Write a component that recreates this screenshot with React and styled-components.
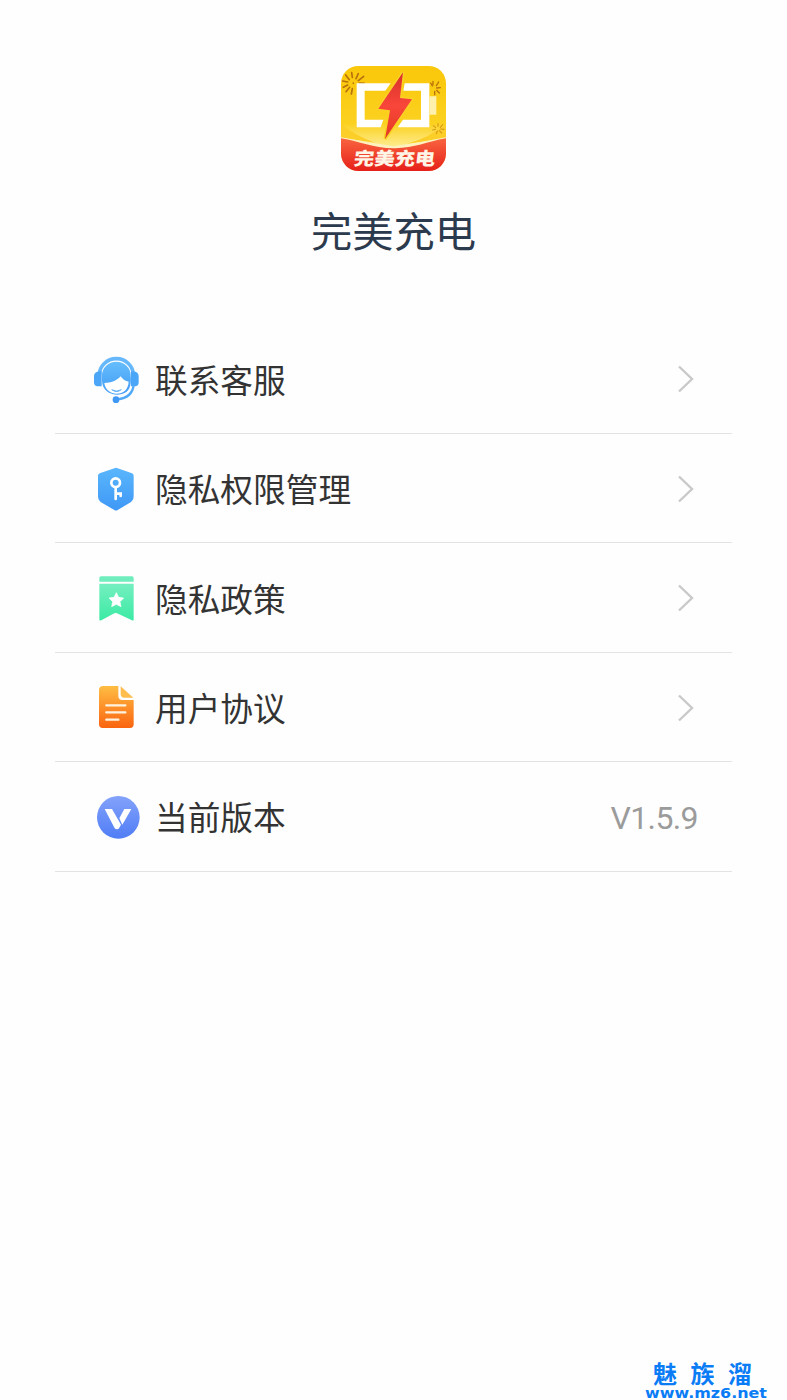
import React from 'react'
import styled, { createGlobalStyle } from 'styled-components'

const LogoArt = () => (
  <svg width='105' height='105' viewBox='33 32 315 315'>
    <defs>
      <linearGradient id='logoBg' x1='0' y1='0' x2='0' y2='1'>
        <stop offset='0' stopColor='#fac70a' />
        <stop offset='0.55' stopColor='#fbd120' />
        <stop offset='0.8' stopColor='#fff0a0' />
      </linearGradient>
      <linearGradient id='logoRed' x1='0' y1='0' x2='0' y2='1'>
        <stop offset='0' stopColor='#f9643f' />
        <stop offset='1' stopColor='#e6201a' />
      </linearGradient>
      <linearGradient id='bolt' x1='0' y1='0' x2='0' y2='1'>
        <stop offset='0' stopColor='#d8312a' />
        <stop offset='0.5' stopColor='#f9463a' />
        <stop offset='1' stopColor='#e23a22' />
      </linearGradient>
      <clipPath id='logoClip'>
        <rect x='33' y='32' width='315' height='315' rx='52' />
      </clipPath>
    </defs>
    <g clipPath='url(#logoClip)'>
      <rect x='33' y='32' width='315' height='315' fill='url(#logoBg)' />
      <path d='M33 206Q78 242 135 262L33 247Z' fill='#fbce28' />
      <path d='M348 206Q300 246 230 266L348 248Z' fill='#fbce28' />
      <path d='M33 246Q110 260 190 273Q270 262 348 246V347H33Z' fill='#fff1bd' />
      <path d='M33 249C90 258 130 280 195 279C255 278 290 259 348 249V347H33Z' fill='url(#logoRed)' />
      <g stroke='#b8700c' strokeWidth='5' strokeLinecap='round' fill='none'>
        <path d='M65 52L67 66M85 55L78 70M101 63L85 76M47 59L58 73M38 77L53 80M40 96L53 89M48 109L59 96M64 116L67 100M88 83L103 84M70 83L70 84' />
        <path d='M309 78V88M326 80L319 91M331 97L320 98M328 113L320 105M302 83L307 92M314 118V108' strokeWidth='4' />
        <path
          d='M324 205V213M338 208L331 216M342 222L332 221M335 233L328 226M310 211L317 217M308 224L316 222M319 235L322 227'
          strokeWidth='3.5'
          stroke='#d99a1a'
        />
      </g>
      <path
        d='M80 84H182L166 106H104V193H160L152 216H80ZM224 84H298V216H203L219 193H273V106H220Z'
        fill='#fff'
      />
      <path d='M298 123H319V178H298Z' fill='#fff0ad' />
      <path
        d='M219 51L145 160L180 165L165 251L246 132L210 128Z'
        fill='url(#bolt)'
        stroke='#fbd025'
        strokeWidth='9'
        paintOrder='stroke'
      />
      <text
        transform='translate(70 330) skewX(-7) scale(1 0.88)'
        textLength='244'
        fontFamily='"Noto Sans CJK SC", sans-serif'
        fontSize='61'
        fontWeight='900'
        fill='#fff5e6'
      >
        完美充电
      </text>
    </g>
  </svg>
)

const ServiceIcon = () => (
  <svg width='48' height='48' viewBox='24 18 144 144'>
    <defs>
      <linearGradient id='service' x1='0' y1='0' x2='0' y2='1'>
        <stop offset='0' stopColor='#66bdfc' />
        <stop offset='1' stopColor='#419bf5' />
      </linearGradient>
    </defs>
    <path d='M43 75A51 49 0 0 1 145 75' fill='none' stroke='#66b8fb' strokeWidth='11' />
    <path d='M50 64H44Q27 66 27 78V98Q27 109 42 109H50Z' fill='#4ba6f8' />
    <path d='M138 64H144Q161 66 161 78V98Q161 109 146 109H138Z' fill='#4ba6f8' />
    <path d='M51 76A43 41 0 0 1 137 76C139 97 138 122 117 130Q95 139 72 128C51 117 50 97 51 76Z' fill='url(#service)' />
    <path d='M58 99C78 99 96 92 107 79Q116 93 131 95C130 118 115 131 95 131C76 131 60 118 58 99Z' fill='#fff' />
    <path d='M80 119Q95 130 109 119Q95 127 80 119Z' fill='#4ba6f8' stroke='#4ba6f8' strokeWidth='2' />
    <path d='M146 105C143 132 125 145 97 148' fill='none' stroke='#51a9f8' strokeWidth='7' />
    <circle cx='93' cy='149' r='10' fill='#3f99f4' />
  </svg>
)

const ShieldIcon = () => (
  <svg width='48' height='48' viewBox='24 15 144 144'>
    <defs>
      <linearGradient id='shield' x1='0' y1='0' x2='0' y2='1'>
        <stop offset='0' stopColor='#5ab6fc' />
        <stop offset='1' stopColor='#3f98f6' />
      </linearGradient>
    </defs>
    <path
      d='M88 25Q93 22 98 25L141 40Q146 42 146 47V108Q146 120 137 127L98 150Q93 153 88 150L48 127Q39 120 39 108V47Q39 42 44 40Z'
      fill='url(#shield)'
    />
    <circle cx='92' cy='68' r='13' fill='none' stroke='#fff' strokeWidth='8' />
    <path d='M92 82V117M92 101H107V108' fill='none' stroke='#fff' strokeWidth='8' strokeLinecap='round' />
  </svg>
)

const BookmarkIcon = () => (
  <svg width='48' height='48' viewBox='25 14 144 144'>
    <defs>
      <linearGradient id='bookmark' x1='0' y1='0' x2='0' y2='1'>
        <stop offset='0' stopColor='#75efc0' />
        <stop offset='1' stopColor='#3beaa4' />
      </linearGradient>
    </defs>
    <path d='M44 34V23Q44 18 49 18H142Q147 18 147 23V34Z' fill='#70edbd' />
    <path d='M44 40H147V148Q147 152 142 150L97 129Q93 127 89 129L50 150Q44 152 44 147Z' fill='url(#bookmark)' />
    <path
      d='M95 67L102 81L117 83L106 94L109 109L95 102L81 109L84 94L73 83L88 81Z'
      fill='#fff'
      stroke='#fff'
      strokeWidth='2'
      strokeLinejoin='round'
    />
  </svg>
)

const DocIcon = () => (
  <svg width='48' height='48' viewBox='25 12 144 144'>
    <defs>
      <linearGradient id='doc' x1='0' y1='0' x2='0' y2='1'>
        <stop offset='0' stopColor='#ffbd43' />
        <stop offset='1' stopColor='#fa6410' />
      </linearGradient>
    </defs>
    <path d='M56 18H101V48Q101 60 113 60H147V133Q147 144 136 144H54Q43 144 43 133V30Q43 18 56 18Z' fill='url(#doc)' />
    <path d='M108 19L146 53H119Q108 53 108 42Z' fill='#ffbd4e' />
    <path d='M65 76H122M65 97H122M65 119H101' stroke='#fff3df' strokeWidth='7' strokeLinecap='round' />
  </svg>
)

const VersionIcon = () => (
  <svg width='48' height='48' viewBox='24 15 144 144'>
    <defs>
      <linearGradient id='version' x1='0' y1='0' x2='0' y2='1'>
        <stop offset='0' stopColor='#83a2fa' />
        <stop offset='1' stopColor='#507df6' />
      </linearGradient>
    </defs>
    <circle cx='100' cy='88' r='64' fill='url(#version)' />
    <path d='M59 63H81L108 110L102 121Q100 124 96 124Q91 124 89 121Z' fill='#fff' />
    <path d='M118 63H139L112 110L103 91Z' fill='#fff' />
  </svg>
)

const Chevron = () => (
  <svg width='18' height='30' viewBox='0 0 18 30'>
    <path d='M2 2.5L15 15L2 27.5' fill='none' stroke='#c9c9c9' strokeWidth='2.4' />
  </svg>
)

const items = [
  { label: '联系客服', icon: <ServiceIcon /> },
  { label: '隐私权限管理', icon: <ShieldIcon /> },
  { label: '隐私政策', icon: <BookmarkIcon /> },
  { label: '用户协议', icon: <DocIcon /> },
  { label: '当前版本', icon: <VersionIcon />, value: 'V1.5.9' },
]

const App = () => {
  return (
    <>
      <GlobalStyle />
      <Page>
        <Header>
          <LogoArt />
          <Title>完美充电</Title>
        </Header>
        <List>
          {items.map((item) => (
            <Row key={item.label}>
              {item.icon}
              <Label>{item.label}</Label>
              {item.value ? <Value>{item.value}</Value> : <Arrow><Chevron /></Arrow>}
            </Row>
          ))}
        </List>
        <Watermark>
          <SiteName>魅族溜</SiteName>
          <SiteUrl>www.mz6.net</SiteUrl>
        </Watermark>
      </Page>
    </>
  )
}

export default App

const GlobalStyle = createGlobalStyle`
  body {
    margin: 0;
    background: #fefefe;
    font-family: "Noto Sans CJK SC", sans-serif;
  }
`

const Page = styled.div`
  position: relative;
  box-sizing: border-box;
  height: 1400px;
  padding: 66px 55px 0;
  overflow: hidden;
`

const Header = styled.header`
  display: flex;
  flex-direction: column;
  align-items: center;
  height: 258.7px;
`

const Title = styled.h1`
  margin: 28px 0 0;
  font-size: 41.3px;
  line-height: 60px;
  font-weight: 400;
  color: #2c3a4e;
`

const List = styled.ul`
  margin: 0;
  padding: 0;
  list-style: none;
`

const Row = styled.li`
  display: flex;
  align-items: center;
  box-sizing: border-box;
  height: 109.4px;
  padding: 2px 34px 0 38px;
  border-bottom: 1px solid #e3e3e3;
`

const Label = styled.span`
  margin: 0 0 2px 14px;
  font-size: 32.7px;
  line-height: 48px;
  color: #333;
`

const Value = styled.span`
  margin: 2px 0 0 auto;
  font-family: Roboto, sans-serif;
  font-size: 32px;
  line-height: 48px;
  letter-spacing: -0.6px;
  color: #9b9b9b;
`

const Arrow = styled.span`
  display: flex;
  margin: 0 3px 1px auto;
`

const Watermark = styled.div`
  position: absolute;
  right: 18px;
  bottom: 0;
  width: 124px;
  color: #0a7cf5;
`

const SiteName = styled.div`
  padding-left: 8px;
  font-size: 24px;
  line-height: 28px;
  font-weight: 700;
  letter-spacing: 13.5px;
  white-space: nowrap;
`

const SiteUrl = styled.div`
  font-family: "DejaVu Sans", sans-serif;
  font-size: 13.5px;
  line-height: 13px;
  font-weight: 700;
  white-space: nowrap;
  transform: scaleX(1.18);
  transform-origin: left;
`
